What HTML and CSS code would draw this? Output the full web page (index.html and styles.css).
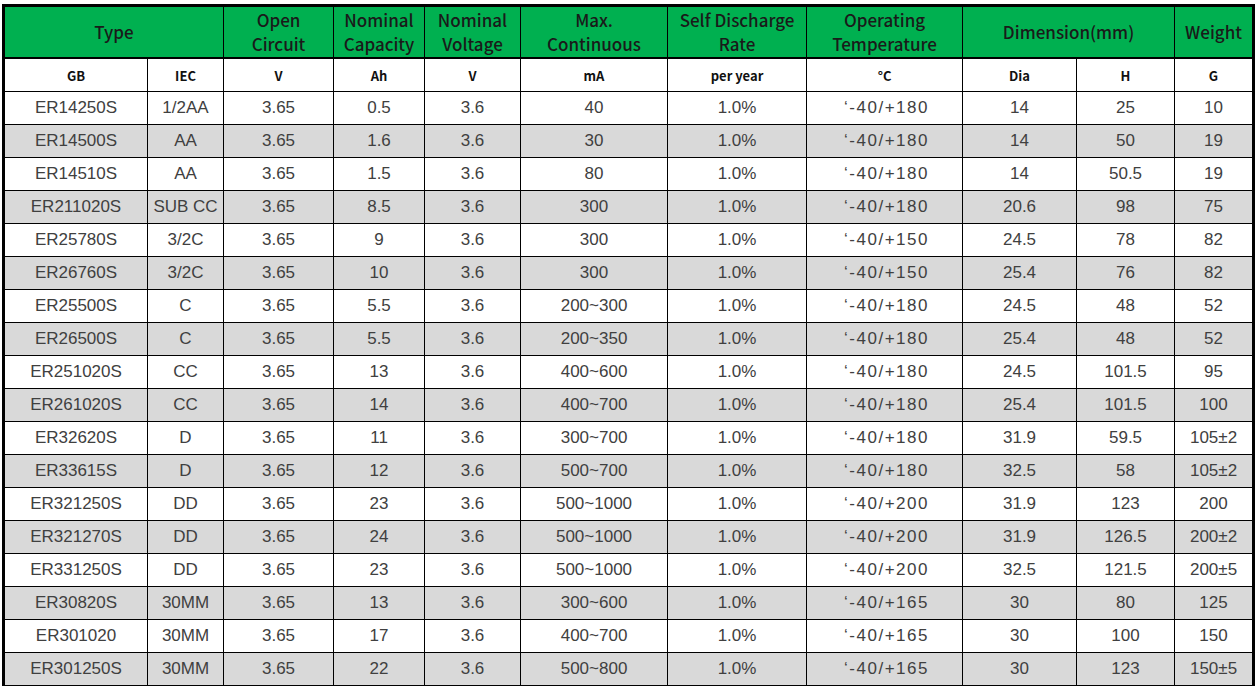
FILE: index.html
```html
<!DOCTYPE html>
<html>
<head>
<meta charset="utf-8">
<link rel="stylesheet" href="styles.css">
</head>
<body>
<table class="spec">
  <colgroup>
    <col class="c1"><col class="c2"><col class="c3"><col class="c4"><col class="c5"><col class="c6"><col class="c7"><col class="c8"><col class="c9"><col class="c10"><col class="c11">
  </colgroup>
  <thead>
    <tr class="head">
      <th colspan="2">Type</th>
      <th>Open<br>Circuit</th>
      <th>Nominal<br>Capacity</th>
      <th>Nominal<br>Voltage</th>
      <th>Max.<br>Continuous</th>
      <th>Self Discharge<br>Rate</th>
      <th>Operating<br>Temperature</th>
      <th colspan="2">Dimension(mm)</th>
      <th>Weight</th>
    </tr>
    <tr class="units">
      <th>GB</th><th>IEC</th><th>V</th><th>Ah</th><th>V</th><th>mA</th><th>per year</th><th>°C</th><th>Dia</th><th>H</th><th>G</th>
    </tr>
  </thead>
  <tbody>
    <tr><td>ER14250S</td><td>1/2AA</td><td>3.65</td><td>0.5</td><td>3.6</td><td>40</td><td>1.0%</td><td class="temp">‘-40/+180</td><td>14</td><td>25</td><td>10</td></tr>
    <tr class="alt"><td>ER14500S</td><td>AA</td><td>3.65</td><td>1.6</td><td>3.6</td><td>30</td><td>1.0%</td><td class="temp">‘-40/+180</td><td>14</td><td>50</td><td>19</td></tr>
    <tr><td>ER14510S</td><td>AA</td><td>3.65</td><td>1.5</td><td>3.6</td><td>80</td><td>1.0%</td><td class="temp">‘-40/+180</td><td>14</td><td>50.5</td><td>19</td></tr>
    <tr class="alt"><td>ER211020S</td><td>SUB CC</td><td>3.65</td><td>8.5</td><td>3.6</td><td>300</td><td>1.0%</td><td class="temp">‘-40/+180</td><td>20.6</td><td>98</td><td>75</td></tr>
    <tr><td>ER25780S</td><td>3/2C</td><td>3.65</td><td>9</td><td>3.6</td><td>300</td><td>1.0%</td><td class="temp">‘-40/+150</td><td>24.5</td><td>78</td><td>82</td></tr>
    <tr class="alt"><td>ER26760S</td><td>3/2C</td><td>3.65</td><td>10</td><td>3.6</td><td>300</td><td>1.0%</td><td class="temp">‘-40/+150</td><td>25.4</td><td>76</td><td>82</td></tr>
    <tr><td>ER25500S</td><td>C</td><td>3.65</td><td>5.5</td><td>3.6</td><td>200~300</td><td>1.0%</td><td class="temp">‘-40/+180</td><td>24.5</td><td>48</td><td>52</td></tr>
    <tr class="alt"><td>ER26500S</td><td>C</td><td>3.65</td><td>5.5</td><td>3.6</td><td>200~350</td><td>1.0%</td><td class="temp">‘-40/+180</td><td>25.4</td><td>48</td><td>52</td></tr>
    <tr><td>ER251020S</td><td>CC</td><td>3.65</td><td>13</td><td>3.6</td><td>400~600</td><td>1.0%</td><td class="temp">‘-40/+180</td><td>24.5</td><td>101.5</td><td>95</td></tr>
    <tr class="alt"><td>ER261020S</td><td>CC</td><td>3.65</td><td>14</td><td>3.6</td><td>400~700</td><td>1.0%</td><td class="temp">‘-40/+180</td><td>25.4</td><td>101.5</td><td>100</td></tr>
    <tr><td>ER32620S</td><td>D</td><td>3.65</td><td>11</td><td>3.6</td><td>300~700</td><td>1.0%</td><td class="temp">‘-40/+180</td><td>31.9</td><td>59.5</td><td>105±2</td></tr>
    <tr class="alt"><td>ER33615S</td><td>D</td><td>3.65</td><td>12</td><td>3.6</td><td>500~700</td><td>1.0%</td><td class="temp">‘-40/+180</td><td>32.5</td><td>58</td><td>105±2</td></tr>
    <tr><td>ER321250S</td><td>DD</td><td>3.65</td><td>23</td><td>3.6</td><td>500~1000</td><td>1.0%</td><td class="temp">‘-40/+200</td><td>31.9</td><td>123</td><td>200</td></tr>
    <tr class="alt"><td>ER321270S</td><td>DD</td><td>3.65</td><td>24</td><td>3.6</td><td>500~1000</td><td>1.0%</td><td class="temp">‘-40/+200</td><td>31.9</td><td>126.5</td><td>200±2</td></tr>
    <tr><td>ER331250S</td><td>DD</td><td>3.65</td><td>23</td><td>3.6</td><td>500~1000</td><td>1.0%</td><td class="temp">‘-40/+200</td><td>32.5</td><td>121.5</td><td>200±5</td></tr>
    <tr class="alt"><td>ER30820S</td><td>30MM</td><td>3.65</td><td>13</td><td>3.6</td><td>300~600</td><td>1.0%</td><td class="temp">‘-40/+165</td><td>30</td><td>80</td><td>125</td></tr>
    <tr><td>ER301020</td><td>30MM</td><td>3.65</td><td>17</td><td>3.6</td><td>400~700</td><td>1.0%</td><td class="temp">‘-40/+165</td><td>30</td><td>100</td><td>150</td></tr>
    <tr class="alt"><td>ER301250S</td><td>30MM</td><td>3.65</td><td>22</td><td>3.6</td><td>500~800</td><td>1.0%</td><td class="temp">‘-40/+165</td><td>30</td><td>123</td><td>150±5</td></tr>
  </tbody>
</table>
</body>
</html>
```

FILE: styles.css
```css
html, body {
  margin: 0;
  padding: 0;
  background: #ffffff;
}
body {
  padding: 4px 0 0 2px;
  font-family: "Liberation Sans", "Noto Sans CJK SC", sans-serif;
}
.spec {
  border-collapse: collapse;
  table-layout: fixed;
  width: 1252px;
  border: 3px solid #000;
}
.c1 { width: 144px; }
.c2 { width: 76px; }
.c3 { width: 110px; }
.c4 { width: 91px; }
.c5 { width: 96px; }
.c6 { width: 147px; }
.c7 { width: 139px; }
.c8 { width: 156px; }
.c9 { width: 114px; }
.c10 { width: 98px; }
.c11 { width: 79px; }
.spec th,
.spec td {
  border: 1px solid #000;
  padding: 0;
  text-align: center;
  overflow: hidden;
  white-space: nowrap;
}
.head th {
  background: #00b050;
  height: 50px;
  font-size: 17px;
  line-height: 24px;
  font-weight: 500;
  color: #1a1a1a;
  font-family: "Noto Sans CJK SC", "Liberation Sans", sans-serif;
  border-bottom: 2px solid #000;
}
.units th {
  background: #fff;
  height: 32px;
  font-size: 13px;
  font-weight: bold;
  color: #111;
  font-family: "Noto Sans CJK SC", "Liberation Sans", sans-serif;
}
.spec td {
  height: 32px;
  font-size: 17px;
  color: #404040;
  background: #fff;
}
.spec td.temp {
  letter-spacing: 1.5px;
  text-indent: 4px;
}
.spec tr.alt td {
  background: #d9d9d9;
}
```
